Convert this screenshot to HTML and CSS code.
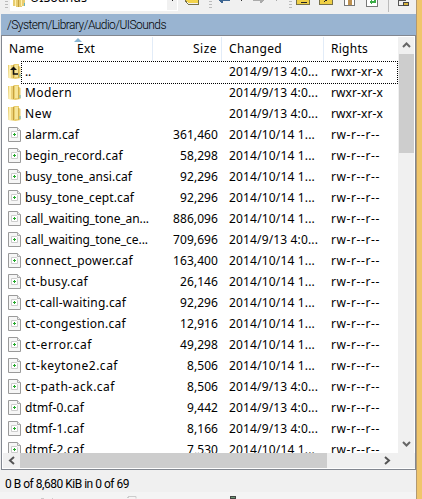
FILE: index.html
```html
<!DOCTYPE html>
<html lang="en"><head><meta charset="utf-8"><title>UISounds</title><link rel="stylesheet" href="styles.css"></head>
<body>
<svg class="defs" width="0" height="0"><defs>
<symbol id="folder" viewBox="0 0 13 15"><path d="M0 1h5l1-1h5v2l1.500 1v11l-5 1-7-1z" fill="#e9ce6c"/><path d="M1 1h2v13H1z" fill="#fff0ad"/><path d="M3 1h2v13H3z" fill="#ecd27a"/><path d="M7 1h3v12H7z" fill="#f7e69a"/><path d="M5 1h1v13H5z" fill="#c5a03c"/><path d="M10 2h1v12h-1z" fill="#d3b04b"/><path d="M12 10v3" stroke="#68b4bd"/></symbol>
<symbol id="file" viewBox="0 0 13 15"><path d="M.5.5h9l3 3v11H.5z" fill="#f6f6f6" stroke="#9a9a9a"/><path d="M9.500.5v3h3" fill="#eee" stroke="#aaa"/><path d="M3.500 4.500h5l1 1v5h-6z" fill="#fff" stroke="#ccc"/><path d="M5 7.500h3M6.500 6v3" stroke="#27a92d"/></symbol>
</defs></svg>
<div class="window"><main>
<header class="toolbar"><svg width="416" height="14" viewBox="0 0 416 14" shape-rendering="crispEdges">
<path d="M10 0h168v11H10z" fill="#fff"/><path d="M167 0h10v10h-10z" fill="#f1f1f1"/><path d="M172 0h1v1h-1z" fill="#222"/>
<path d="M5 1.500h3M5 4.500h3M5 7.500h3M209 1.500h3M209 4.500h3M209 7.500h3M289 1.500h3M289 4.500h3M289 7.500h3" stroke="#bbb"/>
<path d="M13 0h12v6l-6 1-6-1z" fill="#e8cd70"/><path d="M15.500 0v6M21.500 0v6" stroke="#fff0ad"/><path d="M18.500 0v7" stroke="#c5a03c"/><path d="M24.500 3v3" stroke="#68b4bd"/>
<path d="M185 0h13v3h-10z" fill="#f3d34b"/><path d="M185 0l3 4h10V0" fill="none" stroke="#77704a"/>
<path d="M219 0h11v1h-7v2h-2z" fill="#3d6591"/><path d="M253 0h11l-3 3h-1V1h-7z" fill="#aaa"/><path d="M241 0h1v1h-1z" fill="#333"/><path d="M276 0h1v1h-1z" fill="#aaa"/>
<path d="M296.500-2h13v6h-13zM319.500-2h13v6h-13z" fill="#efcf45" stroke="#77704a"/><path d="M301 2h6M324 2l4-3" stroke="#222"/><path d="M344.500-2h10v7h-10z" fill="#fff" stroke="#777"/><path d="M348 0h4v5h-4z" fill="#bd9050"/><path d="M366.500-2h11v8h-11z" fill="#fff" stroke="#777"/><path d="M369 2l3-3v2h2v-2h2v4h-4v2z" fill="#3aac46"/><path d="M388.500 0v12" stroke="#bbb"/><path d="M398.500 0v5h4M398 .5h8" fill="none" stroke="#555"/><path d="M403.500 2.500h5v3h-5z" fill="#d8b33b" stroke="#444"/></svg><span class="clip">UISounds</span></header>
<div class="path"><span class="fit" data-w="158">/System/Library/Audio/UISounds</span></div>
<section class="panel">
<div class="body"><div class="list"><div class="row head"><div class="name"><span class="fit" data-w="34">Name</span><span class="ext fit" data-w="17">Ext</span><i class="sort"></i></div><div class="size"><span class="fit" data-w="23">Size</span></div><div class="date"><span class="fit" data-w="52">Changed</span></div><div class="rights"><span class="fit" data-w="36">Rights</span></div></div><div id="rows"></div></div>
<div class="vbar"><svg width="15" height="17"><path d="M4 10l3.500-3.500L11 10" fill="none" stroke="#666" stroke-width="2"/></svg><i class="vthumb"></i><svg class="down" width="15" height="17"><path d="M4 6l3.500 3.500L11 6" fill="none" stroke="#666" stroke-width="2"/></svg></div></div>
<div class="hbar"><svg width="18" height="15"><path d="M11 4L7 7.500 11 11" fill="none" stroke="#555" stroke-width="2"/></svg><i class="hthumb"></i><svg class="right" width="18" height="15"><path d="M4 4l4 3.500L4 11" fill="none" stroke="#555" stroke-width="2"/></svg></div>
</section>
<footer><span class="fit" data-w="123">0 B of 8,680 KiB in 0 of 69</span></footer>
<svg class="below" width="416" height="7"><path d="M41 6.500h3M52 6.500h1M127 5.500h2M128 4.500h8v2" fill="none" stroke="#ccc"/><path d="M230 4h6v3h-6z" fill="#444"/><path d="M231 5h4v1h-4z" fill="#6a9a70"/></svg>
</main><aside></aside></div>
<script src="app.js"></script></body></html>
```
FILE: app.js
```js
// name, name width, size, size width, changed in October
const files = [
 ['..',5,'',0,0],['Modern',46,'',0,0],['New',26,'',0,0],['alarm.caf',53,'361,460',44,1],['begin_record.caf',97,'58,298',37,1],['busy_tone_ansi.caf',106,'92,296',37,1],['busy_tone_cept.caf',108,'92,296',37,1],['call_waiting_tone_an...',123,'886,096',44,1],['call_waiting_tone_ce...',122,'709,696',44,0],['connect_power.caf',107,'163,400',44,1],['ct-busy.caf',62,'26,146',37,1],['ct-call-waiting.caf',100,'92,296',37,1],['ct-congestion.caf',100,'12,916',37,1],['ct-error.caf',66,'49,298',37,1],['ct-keytone2.caf',92,'8,506',30,1],['ct-path-ack.caf',89,'8,506',30,0],['dtmf-0.caf',58,'9,442',30,0],['dtmf-1.caf',58,'8,166',30,0],['dtmf-2.caf',58,'7,530',30,1]];
const span = (t,w) => t ? `<span class="fit" data-w="${w}">${t}</span>` : '';
document.getElementById('rows').innerHTML = files.map(([n,nw,s,sw,o],i) => `<div class="row ${i===0?'focus':''}"><svg class="icon" width="13" height="15"><use href="#${i<3?'folder':'file'}"/>${i===0?'<path d="M5.500 4v6H10" fill="none" stroke="#111" stroke-width="1.500"/><path d="M2 6l3.500-3.500L9 6z" fill="#111"/>':''}</svg><div class="name">${span(n,nw)}</div><div class="size">${span(s,sw)}</div><div class="date">${o?span('2014/10/14 1...',85):span('2014/9/13 4:0...',88)}</div><div class="rights">${i<3?span('rwxr-xr-x',51):span('rw-r--r--',48)}</div></div>`).join('');
document.querySelectorAll('.fit').forEach(e => { const w=e.getBoundingClientRect().width; e.style.letterSpacing=((+e.dataset.w+1-w)/e.textContent.length)+'px'; });
```
FILE: styles.css
```css
*{box-sizing:border-box}
body{margin:0;background:#f0f0f0;color:#000;font:12px/20px "Noto Sans","Open Sans",sans-serif;overflow:hidden}
.defs{position:absolute}
svg{display:block;flex:none}
.fit{display:inline-block;white-space:nowrap}
.window{display:flex;width:422px;height:499px}
main{width:416px;display:flex;flex-direction:column}
aside{width:6px;background:#f0c66b;border-left:1px solid #b29972}
.toolbar{height:14px;position:relative;overflow:hidden}
.clip{position:absolute;left:30px;top:-11px;font-size:12.500px;line-height:18px}
.path{height:21px;margin-left:1px;padding-left:6px;background:#99b4d1;font:300 12px/22px Roboto,sans-serif}
.panel{margin-left:1px;height:436px;border:1px solid #828790;background:#fff;display:flex;flex-direction:column;padding:1px 0 1px 1px}
.body{height:416px;display:flex;overflow:hidden}
.list{width:395px;overflow:hidden}
.row{height:21px;display:flex;align-items:center;padding-left:5px}
#rows .fit{padding-top:2px}
.head{height:24px}
.head .name{width:145px;border-right:1px solid #e2ecf8;padding-left:1px;position:relative}
.head>div{height:24px;line-height:24px;border-right:1px solid #e2ecf8}
.head .rights{border:0}
.ext{margin-left:33px}
.sort{position:absolute;left:66px;top:1px;border:4px solid transparent;border-top:0;border-bottom:4px solid #88b5d3}
.icon{margin:1px 0 0}
.name{width:132px;padding-left:4px}
.size{width:69px;padding-right:4px;text-align:right}
.date{width:102px;padding-left:7px}
.rights{width:72px;padding-left:7px}
.focus{position:relative}
.focus::after{content:"";position:absolute;left:18px;right:0;top:0;height:21px;border:1px dotted #000}
.vbar{width:16px;background:#f0f0f0;padding-left:1px;display:flex;flex-direction:column}
.vthumb{width:15px;height:99px;background:#cdcdcd}
.down{margin-top:auto}
.hbar{height:15px;background:#f0f0f0;display:flex}
.hthumb{width:307px;background:#cdcdcd;margin-left:-1px}
.right{margin-left:auto;margin-right:16px}
footer{height:21px;margin-top:1px;padding-left:5px;font:12px/26px Roboto,sans-serif}
.below{background:#f4f4f4;height:7px}
```
